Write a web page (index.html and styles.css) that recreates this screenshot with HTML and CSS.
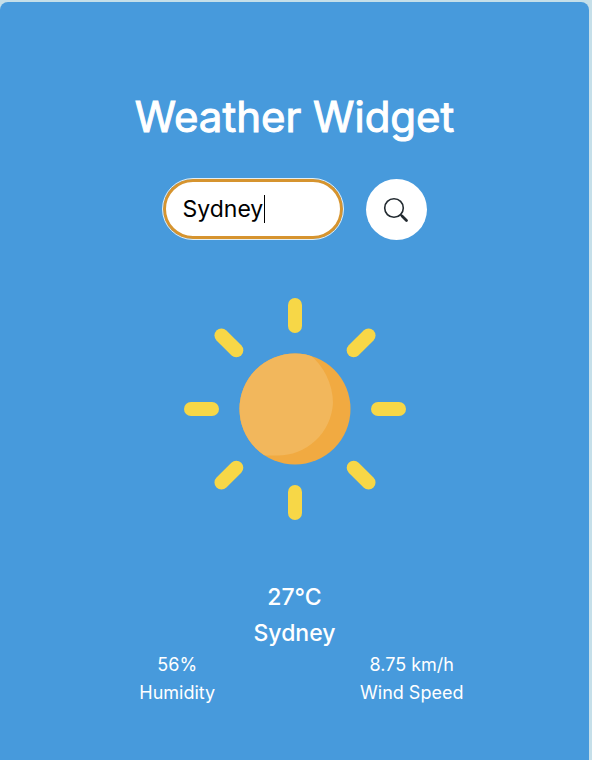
FILE: index.html
```html
<!DOCTYPE html>
<html lang="en">
<head>
<meta charset="utf-8">
<meta name="viewport" content="width=device-width, initial-scale=1">
<title>Weather Widget</title>
<link rel="stylesheet" href="styles.css">
</head>
<body>
<main class="widget">
  <h1 class="title">Weather Widget</h1>
  <form class="search">
    <div class="field">
      <input class="city-input" type="text" value="Sydney" aria-label="City">
      <span class="caret" aria-hidden="true"></span>
    </div>
    <button class="search-button" type="button" aria-label="Search">
      <svg width="26" height="26" viewBox="0 0 26 26" fill="none" stroke="#222a30" stroke-linecap="round" aria-hidden="true">
        <circle cx="11" cy="11" r="9.300" stroke-width="1.600"/>
        <path d="M17.500 17.500L19 19" stroke-width="1.600"/>
        <path d="M19 19L23.500 23.500" stroke-width="2.800"/>
      </svg>
    </button>
  </form>
  <svg class="sun" viewBox="0 0 222 222" aria-hidden="true">
    <defs>
      <clipPath id="disc"><circle cx="111" cy="111" r="55.500"/></clipPath>
    </defs>
    <g stroke="#f7d747" stroke-width="14" stroke-linecap="round">
      <path d="M111 7V28"/>
      <path d="M111 7V28" transform="rotate(45 111 111)"/>
      <path d="M111 7V28" transform="rotate(90 111 111)"/>
      <path d="M111 7V28" transform="rotate(135 111 111)"/>
      <path d="M111 7V28" transform="rotate(180 111 111)"/>
      <path d="M111 7V28" transform="rotate(225 111 111)"/>
      <path d="M111 7V28" transform="rotate(270 111 111)"/>
      <path d="M111 7V28" transform="rotate(315 111 111)"/>
    </g>
    <circle cx="111" cy="111" r="55.500" fill="#f1aa41"/>
    <path d="M30 30H111L125 56A64 64 0 0 1 149 105A55.500 55.500 0 0 1 93 157.500H30Z" fill="#f2b75c" clip-path="url(#disc)"/>
  </svg>
  <p class="reading">27°C</p>
  <p class="reading">Sydney</p>
  <div class="details">
    <div class="detail"><p>56%</p><p>Humidity</p></div>
    <div class="detail"><p>8.75 km/h</p><p>Wind Speed</p></div>
  </div>
</main>
</body>
</html>
```
FILE: styles.css
```css
* {
  box-sizing: border-box;
}

body {
  margin: 0;
  min-height: 100vh;
  display: flex;
  padding: 2px 3px 0 0;
  background: #c5dfe9;
  font-family: Inter, "Liberation Sans", sans-serif;
  color: #fff;
}

h1,
p {
  margin: 0;
  font-weight: 400;
}

.widget {
  flex: 1;
  display: flex;
  flex-direction: column;
  align-items: center;
  padding: 80px 60px 48px;
  border-radius: 8px 8px 0 0;
  background: #479adc;
  text-align: center;
}

.title {
  font-size: 42px;
  line-height: 70px;
  -webkit-text-stroke: 1px #fff;
}

.search {
  display: flex;
  gap: 23px;
  margin-top: 27px;
}

.field {
  position: relative;
}

.city-input {
  display: block;
  width: 180px;
  height: 60px;
  padding: 0 17px;
  border: 3px solid #d6942f;
  border-radius: 30px;
  outline: 1px solid #e4eef2;
  background: #fff;
  color: #000;
  font: 400 23px/30px Inter, "Liberation Sans", sans-serif;
}

.caret {
  position: absolute;
  left: 101px;
  top: 16px;
  width: 1px;
  height: 28px;
  background: #000;
}

.search-button {
  display: grid;
  place-items: center;
  width: 61px;
  height: 61px;
  padding: 0;
  border: 0;
  border-radius: 50%;
  background: #fff;
}

.sun {
  width: 222px;
  height: 222px;
  margin: 58px 0 59px;
}

.reading {
  font-size: 23px;
  font-weight: 500;
  line-height: 36px;
}

.details {
  display: grid;
  grid-template-columns: 1fr 1fr;
  width: 100%;
}

.detail {
  font-size: 18px;
  line-height: 28px;
  -webkit-text-stroke: 0 #fff;
}
```
